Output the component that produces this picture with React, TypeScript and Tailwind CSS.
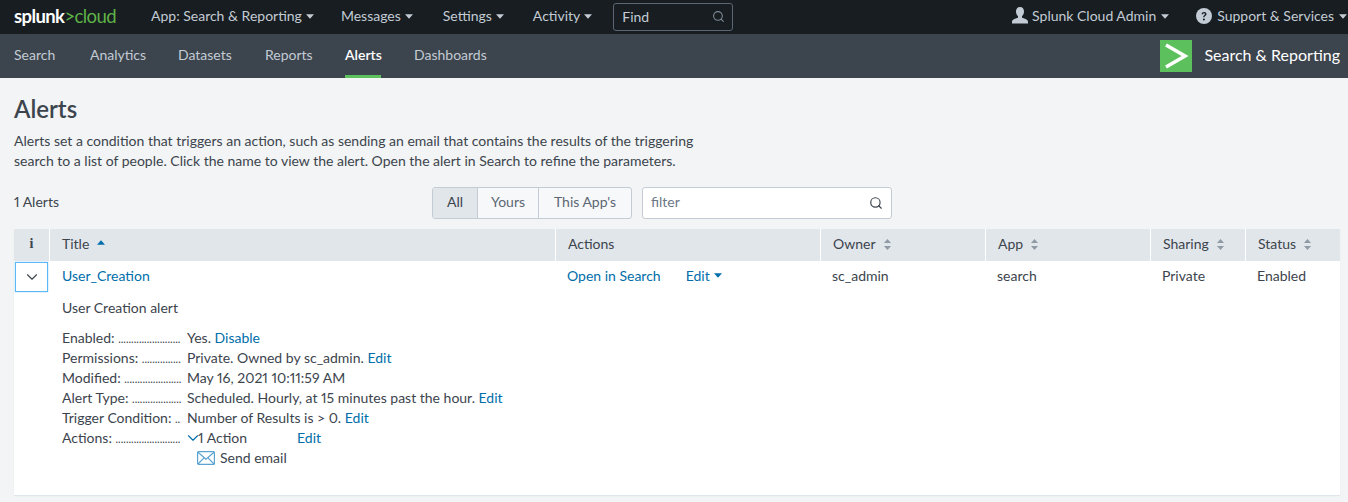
import React from 'react';
import { ChevronDown, Search } from 'lucide-react';

const Caret: React.FC<{ className?: string }> = ({ className }) => (
  <svg viewBox="0 0 8 5" className={`inline-block w-2 h-[5px] ${className ?? ''}`} fill="currentColor">
    <path d="M0 .3h8L4 4.8z" />
  </svg>
);

const SortIcon: React.FC = () => (
  <svg viewBox="0 0 7 11" className="inline-block w-[7px] h-[11px] text-[#8f9aa5]" fill="currentColor">
    <path d="M3.5 0L7 4H0zM0 7h7l-3.5 4z" />
  </svg>
);

const TopItem: React.FC<{ label: string; className?: string }> = ({ label, className }) => (
  <a className={`flex items-center gap-1 text-[#c3cbd4] ${className ?? ''}`}>
    {label}
    <Caret />
  </a>
);

const HeadCell: React.FC<{ label: string; sort?: boolean; className?: string }> = ({ label, sort = true, className }) => (
  <div className={`flex items-center gap-2 bg-[#e1e6eb] pb-[2px] ${className ?? ''}`}>
    <span>{label}</span>
    {sort && <SortIcon />}
  </div>
);

const details: { label: string; dots: string; value: React.ReactNode }[] = [
  { label: 'Enabled:', dots: '........................', value: <>Yes. <a className="text-[#006eaa]">Disable</a></> },
  { label: 'Permissions:', dots: '...............', value: <>Private. Owned by sc_admin. <a className="text-[#006eaa]">Edit</a></> },
  { label: 'Modified:', dots: '......................', value: <>May 16, 2021 10:11:59 AM</> },
  { label: 'Alert Type:', dots: '...................', value: <>Scheduled. Hourly, at 15 minutes past the hour. <a className="text-[#006eaa]">Edit</a></> },
  { label: 'Trigger Condition:', dots: '..', value: <>Number of Results is &gt; 0. <a className="text-[#006eaa]">Edit</a></> },
];

const gridCols = 'grid-cols-[35px_505px_264px_164px_164px_94px_94px] gap-x-px';

const subNav = [
  { label: 'Search', width: 'w-[43px]' },
  { label: 'Analytics', width: 'w-[55px]' },
  { label: 'Datasets', width: 'w-[54px]' },
  { label: 'Reports', width: 'w-[47px]' },
  { label: 'Alerts', width: 'w-[36px]' },
  { label: 'Dashboards', width: 'w-[73px]' },
];

export default function App() {
  return (
    <div className="h-[502px] overflow-hidden bg-[#f2f4f5] text-[14px] leading-5 text-[#3c444d] proportional-nums font-['Lato','Liberation_Sans',sans-serif]">
      <header className="flex h-[34px] items-center bg-[#171d21] pb-[2px]">
        <div className="ml-[14px] w-[137px] text-[18.5px] tracking-[-0.6px] leading-none">
          <span className="font-bold text-white">splunk</span>
          <span className="text-[#5fb346]">&gt;cloud</span>
        </div>
        <nav className="flex items-center">
          <TopItem label="App: Search & Reporting" />
          <TopItem label="Messages" className="ml-[27px]" />
          <TopItem label="Settings" className="ml-[30px]" />
          <TopItem label="Activity" className="ml-[29px]" />
        </nav>
        <div className="ml-[21px] mt-[2px] flex h-7 w-[120px] items-center justify-between rounded-[3px] border border-[#5c6773] pb-[1px] pl-2 pr-[7px] text-[#c3cbd4]">
          Find
          <Search className="h-[13px] w-[13px] text-[#7f8b97]" strokeWidth={2} />
        </div>
        <div className="ml-auto flex items-center pr-[1px] text-[#c3cbd4]">
          <svg viewBox="0 0 18 18" className="h-[18px] w-[18px] text-[#c3cbd4]" fill="currentColor">
            <path d="M9 0c2.6 0 4 2 4 4.6 0 2-.8 3.7-2 4.7v1.5c2.8.8 6 1.6 6 4.2v1.5H1V15c0-2.6 3.2-3.4 6-4.2V9.3c-1.2-1-2-2.7-2-4.7C5 2 6.4 0 9 0z" />
          </svg>
          <a className="ml-[3px] flex items-center gap-[5px]">Splunk Cloud Admin <Caret /></a>
          <svg viewBox="0 0 16 16" className="ml-[27px] h-4 w-4 text-[#c3cbd4]">
            <circle cx="8" cy="8" r="8" fill="currentColor" />
            <path d="M5.6 6.2C5.7 4.8 6.7 4 8.1 4c1.4 0 2.4.8 2.4 2 0 1-.6 1.5-1.3 2-.5.4-.7.6-.7 1.3H7.2c0-1.1.3-1.6 1-2.1.5-.4.8-.7.8-1.1 0-.5-.4-.8-.9-.8-.6 0-1 .4-1 1z" fill="#171d21" />
            <circle cx="7.9" cy="11.4" r="1" fill="#171d21" />
          </svg>
          <a className="ml-[5px] flex items-center gap-[5px]">Support &amp; Services <Caret /></a>
        </div>
      </header>

      <div className="flex h-11 items-stretch bg-[#3c444d] text-[#c3cbd4]">
        <nav className="ml-[14px] flex gap-[33px]">
          {subNav.map((item) => (
            <a
              key={item.label}
              className={`flex items-center whitespace-nowrap border-b-[3px] pt-[1px] ${item.width} ${item.label === 'Alerts' ? 'border-[#5cc05c] font-semibold text-white' : 'border-transparent'}`}
            >
              {item.label}
            </a>
          ))}
        </nav>
        <div className="ml-auto flex items-center pr-2">
          <div className="flex h-8 w-8 items-center justify-center bg-[#5cc05c]">
            <svg viewBox="0 0 32 32" className="h-8 w-8" fill="none" stroke="#fff" strokeWidth="3.6">
              <path d="M6 5l19 11L6 27" />
            </svg>
          </div>
          <span className="mb-[2px] ml-3 text-[16px] text-white">Search &amp; Reporting</span>
        </div>
      </div>

      <main className="px-[14px]">
        <h1 className="pt-[17px] text-[24px] font-semibold leading-[28px]">Alerts</h1>
        <p className="mt-[8px] w-[700px]">
          Alerts set a condition that triggers an action, such as sending an email that contains the results of the triggering search to a list of people. Click the name to view the alert. Open the alert in Search to refine the parameters.
        </p>

        <div className="relative mt-[16px] flex h-8 items-center">
          <span className="w-[418px] pb-[2px]">1 Alerts</span>
          <div className="flex h-8 overflow-hidden rounded-[3px] border border-[#c3cbd4] bg-[#f7f8fa] text-[#5c6773]">
            <span className="flex w-[44px] items-center justify-center bg-[#e1e6eb] pb-[2px] text-[#3c444d]">All</span>
            <span className="flex w-[62px] items-center justify-center border-x border-[#c3cbd4] pb-[2px]">Yours</span>
            <span className="flex w-[92px] items-center justify-center pb-[2px]">This App's</span>
          </div>
          <div className="ml-[10px] flex h-8 w-[250px] items-center justify-between rounded-[3px] border border-[#c3cbd4] bg-white pl-2 pr-[8px] text-[#6b7785]">
            <span className="pb-[2px]">filter</span>
            <Search className="h-[14px] w-[14px] text-[#3c444d]" strokeWidth={2} />
          </div>
        </div>

        <section className="mt-[10px] h-[266px] w-[1326px] bg-white shadow-[0_1px_1px_#e1e6eb]">
          <div className={`grid h-8 ${gridCols} bg-white`}>
            <div className="flex items-center justify-center bg-[#e1e6eb] pb-[2px] font-['Liberation_Serif',serif] font-bold">i</div>
            <div className="flex items-center gap-2 bg-[#e1e6eb] pb-[2px] pl-3">
              <span>Title</span>
              <Caret className="mb-[4px] rotate-180 text-[#006eaa]" />
            </div>
            <HeadCell label="Actions" sort={false} className="pl-3" />
            <HeadCell label="Owner" className="pl-3" />
            <HeadCell label="App" className="pl-3" />
            <HeadCell label="Sharing" className="pl-3" />
            <HeadCell label="Status" className="pl-3" />
          </div>

          <div className={`grid h-[30px] ${gridCols}`}>
            <button className="ml-[1px] mt-[1px] flex h-[30px] w-[33px] items-center justify-center border border-[#5cb8f5] bg-white shadow-[0_0_1px_#5cb8f5]">
              <ChevronDown className="h-[18px] w-[18px] text-[#3c444d]" strokeWidth={1.5} />
            </button>
            <a className="flex items-center pb-[2px] pl-3 text-[#006eaa]">User_Creation</a>
            <div className="flex items-center pb-[2px] pl-[11px] text-[#006eaa]">
              <a>Open in Search</a>
              <a className="ml-[25px] flex items-center gap-1">Edit <Caret /></a>
            </div>
            <span className="flex items-center pb-[2px] pl-[11px]">sc_admin</span>
            <span className="flex items-center pb-[2px] pl-[11px]">search</span>
            <span className="flex items-center pb-[2px] pl-[11px]">Private</span>
            <span className="flex items-center pb-[2px] pl-[11px]">Enabled</span>
          </div>

          <div className="pl-12">
            <p className="mt-[7px]">User Creation alert</p>
            <dl className="mt-[10px]">
              {details.map((row) => (
                <div key={row.label} className="flex h-5">
                  <dt className="w-[125px] overflow-hidden whitespace-nowrap">{row.label} <span className="text-[11px]">{row.dots}</span></dt>
                  <dd>{row.value}</dd>
                </div>
              ))}
              <div className="flex h-5">
                <dt className="w-[125px] overflow-hidden whitespace-nowrap">Actions: <span className="text-[11px]">.........................</span></dt>
                <dd className="flex items-center">
                  <ChevronDown className="-ml-[3px] -mr-[4px] h-[18px] w-[18px] text-[#006eaa]" strokeWidth={1.5} />
                  <span className="w-[99px]">1 Action</span>
                  <a className="text-[#006eaa]">Edit</a>
                </dd>
              </div>
              <div className="ml-[135px] flex h-5 items-center">
                <svg viewBox="0 0 18 14" className="h-[14px] w-[18px]" fill="none" stroke="#5ba3d0" strokeWidth="1.2">
                  <rect x=".6" y=".6" width="16.8" height="12.8" rx="1" />
                  <path d="M1 1.2l8 7 8-7M1 13l6-6.2M17 13l-6-6.2" />
                </svg>
                <span className="ml-[5px]">Send email</span>
              </div>
            </dl>
          </div>
        </section>
      </main>
    </div>
  );
}
